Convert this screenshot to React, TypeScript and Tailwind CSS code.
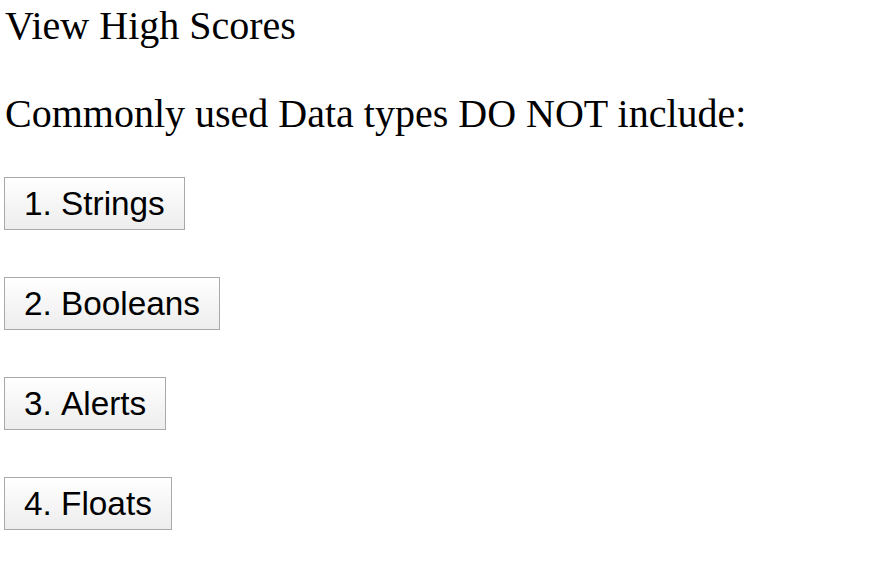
import React from 'react';

const choices = ['1. Strings', '2. Booleans', '3. Alerts', '4. Floats'];

const App: React.FC = () => {
  return (
    <div className="min-h-screen bg-white text-black px-[4px] pt-[3px] font-['Liberation_Serif','Times_New_Roman',serif]">
      <div className="text-[40px] leading-[46px] pl-[1px]">View High Scores</div>

      <p className="text-[40px] leading-[46px] mt-[42px] pl-[1px]">
        Commonly used Data types DO NOT include:
      </p>

      <div className="flex flex-col items-start gap-[47px] mt-[40px]">
        {choices.map((c) => (
          <button
            key={c}
            className="h-[53px] px-[19px] border border-[#a9a9a9] bg-gradient-to-b from-[#ffffff] to-[#ededed] text-[33.33px] leading-[38px] text-black [font-kerning:none] font-['Liberation_Sans',Arial,sans-serif]"
          >
            {c}
          </button>
        ))}
      </div>
    </div>
  );
};

export default App;
